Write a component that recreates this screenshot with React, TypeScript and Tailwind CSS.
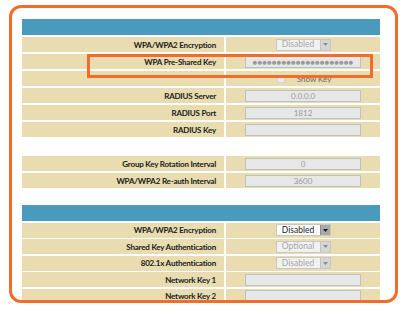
import type { ReactNode } from 'react';

// ── Small form controls ───────────────────────────────────────────────────────
function TextBox({ value = '' }: { value?: string }) {
  return (
    <div className="w-[116px] h-[12px] bg-[#e6e7e7] border border-[#bfc0c0] flex items-center justify-center text-[8px] leading-none text-[#9a9a9a]">
      {value}
    </div>
  );
}

function Select({ value, enabled = false }: { value: string; enabled?: boolean }) {
  return (
    <div className="flex h-[12px] w-[55px] border border-[#c8c8c8]">
      <div
        className={
          enabled
            ? 'flex-1 bg-white flex items-center justify-center text-[8.5px] leading-none text-[#222]'
            : 'flex-1 bg-[#f1f1f1] flex items-center justify-center text-[8.5px] leading-none text-[#a8a8a8]'
        }
      >
        {value}
      </div>
      <div
        className={
          enabled
            ? 'w-[10px] bg-[#a9a9a9] border-l border-[#8c8c8c] flex items-center justify-center'
            : 'w-[10px] bg-[#d6d6d6] border-l border-[#c4c4c4] flex items-center justify-center'
        }
      >
        <svg width="5" height="3" viewBox="0 0 5 3">
          <path d="M0 0h5L2.5 3z" fill={enabled ? '#1a1a1a' : '#8a8a8a'} />
        </svg>
      </div>
    </div>
  );
}

function Row({ label, children }: { label: string; children?: ReactNode }) {
  return (
    <div className="flex h-[15px] gap-[2px]">
      <div className="w-[202px] bg-[#e8dcb0] flex items-center justify-end pr-[8px] text-[8px] tracking-[-0.2px] leading-none font-bold text-[#1a1a1a]">
        {label}
      </div>
      <div className="flex-1 bg-[#e8dcb0] flex items-center justify-center">{children}</div>
    </div>
  );
}

export default function App() {
  return (
    <div
      className="relative w-[412px] h-[314px] bg-white overflow-hidden"
      style={{ fontFamily: 'Lato, "Open Sans", "Liberation Sans", sans-serif' }}
    >
      <div className="ml-[9px] mt-[5px] w-[389px] h-[298px] border-[3px] border-[#f26c2b] rounded-[12px] overflow-hidden pl-[10px] pr-[15px] pt-[11px]">
        {/* WPA / RADIUS settings */}
        <div className="flex flex-col gap-[2px]">
          <div className="h-[16px] bg-[#4a9abd]" />
          <Row label="WPA/WPA2 Encryption">
            <Select value="Disabled" />
          </Row>
          <Row label="WPA Pre-Shared Key">
            <TextBox value="●●●●●●●●●●●●●●●●●●●●●" />
          </Row>
          <Row label="">
            <div className="flex items-center gap-[12px] pl-[2px]">
              <div className="w-[8px] h-[8px] bg-[#ececec] border border-[#d4d4d4]" />
              <span className="text-[8px] leading-none text-[#6b6b6b]">Show Key</span>
            </div>
          </Row>
          <Row label="RADIUS Server">
            <TextBox value="0.0.0.0" />
          </Row>
          <Row label="RADIUS Port">
            <TextBox value="1812" />
          </Row>
          <Row label="RADIUS Key">
            <TextBox />
          </Row>
          <div className="h-[15px]" />
          <Row label="Group Key Rotation Interval">
            <TextBox value="0" />
          </Row>
          <Row label="WPA/WPA2 Re-auth Interval">
            <TextBox value="3600" />
          </Row>
        </div>

        {/* WEP settings */}
        <div className="mt-[17px] flex flex-col gap-[1.5px]">
          <div className="h-[16px] bg-[#4a9abd]" />
          <Row label="WPA/WPA2 Encryption">
            <Select value="Disabled" enabled />
          </Row>
          <Row label="Shared Key Authentication">
            <Select value="Optional" />
          </Row>
          <Row label="802.1x Authentication">
            <Select value="Disabled" />
          </Row>
          <Row label="Network Key 1">
            <TextBox />
          </Row>
          <Row label="Network Key 2">
            <TextBox />
          </Row>
        </div>
      </div>

      {/* callout around the pre-shared key row */}
      <div className="absolute left-[87px] top-[54px] w-[286px] h-[24px] border-[3px] border-[#f26c2b]" />
    </div>
  );
}
